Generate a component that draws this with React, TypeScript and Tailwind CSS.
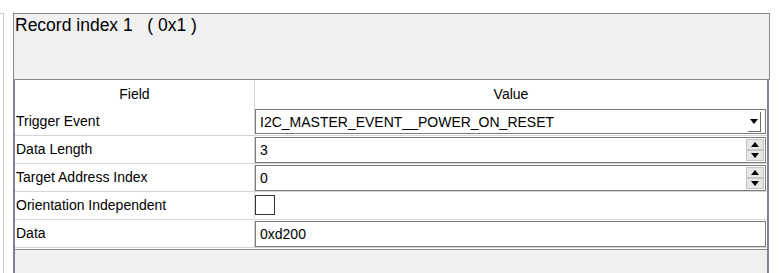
import React from "react";

const Up = () => (
  <svg width="8" height="5" viewBox="0 0 8 5" className="block">
    <polygon points="0,5 4,0 8,5" fill="#000" />
  </svg>
);
const Down = () => (
  <svg width="8" height="5" viewBox="0 0 8 5" className="block">
    <polygon points="0,0 8,0 4,5" fill="#000" />
  </svg>
);

function Spinner({ value }: { value: string }) {
  return (
    <div className="h-[26px] mr-[1px] border border-[#7a7a7a] bg-white flex items-center">
      <div className="flex-1 pl-[4px] leading-none">{value}</div>
      <div className="w-[18px] h-full flex flex-col justify-center gap-0 py-[1px] mr-[1px]">
        <div className="h-[11px] bg-[#e6e6e6] border border-[#c4c4c4] flex items-center justify-center">
          <Up />
        </div>
        <div className="h-[11px] bg-[#e6e6e6] border border-[#c4c4c4] flex items-center justify-center">
          <Down />
        </div>
      </div>
    </div>
  );
}

function Row({ label, children }: { label: string; children: React.ReactNode }) {
  return (
    <div className="grid grid-cols-[240px_1fr] h-[28px] border-b border-[#d6d6d6]">
      <div className="border-r border-[#d6d6d6] flex items-center pl-[1px]">{label}</div>
      <div className="pt-[1px]">{children}</div>
    </div>
  );
}

export default function App() {
  return (
    <div
      className="w-[780px] h-[273px] bg-white flex text-black text-[14px]"
      style={{ fontFamily: '"Liberation Sans", Arial, sans-serif' }}
    >
      <div className="w-[13px] pt-[13px] h-full">
        <div className="w-[4px] h-full border-t border-r border-[#c8c8c8]" />
      </div>
      <div className="w-[757px] mt-[13px] flex flex-col h-[260px]">
        <div className="h-[67px] border border-[#8a8a8a] bg-[#f0f0f0] pt-[2px] pl-[1px] text-[17.5px] whitespace-pre leading-[19px]">
          {"Record index 1   ( 0x1 )"}
        </div>
        <div className="w-[756px] flex-1 flex flex-col border-l-2 border-r-2 border-[#808090] bg-[#f0f0f0]">
          <div className="bg-white border-b border-[#8a8a8a] pb-[1px]">
            <div className="grid grid-cols-[240px_1fr] h-[28px]">
              <div className="border-r border-[#d6d6d6] flex items-center justify-center">Field</div>
              <div className="flex items-center justify-center">Value</div>
            </div>
            <Row label="Trigger Event">
              <div className="h-[25px] mr-[1px] border border-[#7a7a7a] bg-white flex items-center">
                <div className="flex-1 pl-[4px] leading-none">I2C_MASTER_EVENT__POWER_ON_RESET</div>
                <div className="w-[13px] h-[20px] mr-[4px] border-r border-b border-[#6e6e6e] flex items-center justify-center">
                  <Down />
                </div>
              </div>
            </Row>
            <Row label="Data Length">
              <Spinner value="3" />
            </Row>
            <Row label="Target Address Index">
              <Spinner value="0" />
            </Row>
            <Row label="Orientation Independent">
              <div className="pt-[2px]">
                <div className="w-[20px] h-[20px] border border-[#333] bg-white" />
              </div>
            </Row>
            <Row label="Data">
              <div className="h-[26px] mr-[1px] border border-[#7a7a7a] bg-white flex items-center pl-[4px] leading-none">
                0xd200
              </div>
            </Row>
          </div>
        </div>
      </div>
    </div>
  );
}
